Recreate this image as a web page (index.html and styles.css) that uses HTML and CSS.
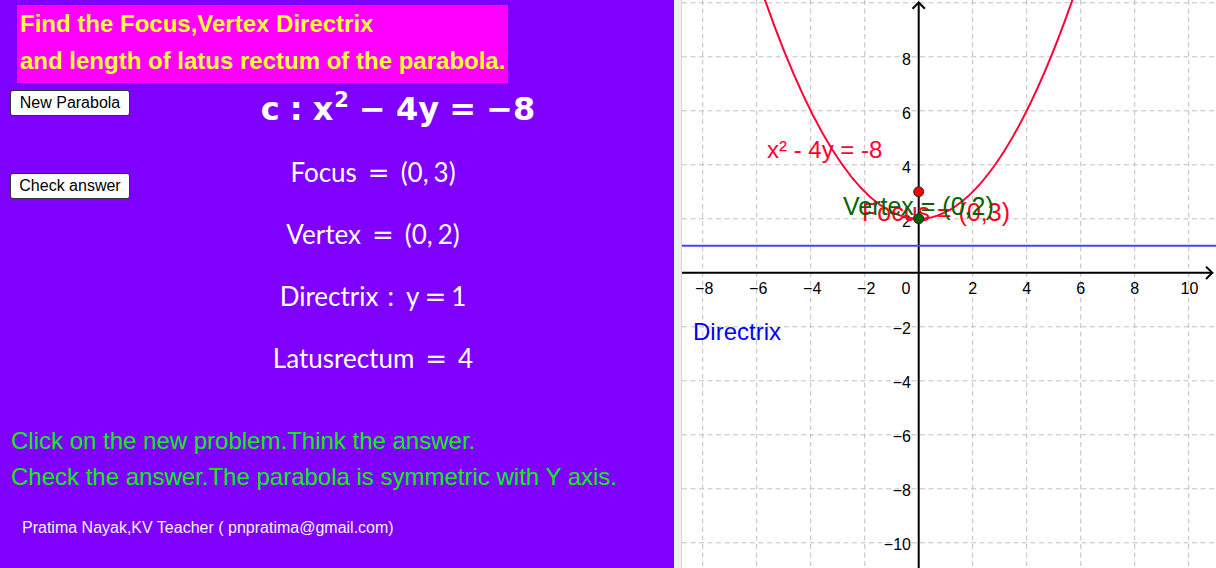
FILE: index.html
```html
<!DOCTYPE html>
<html lang="en">
<head>
<meta charset="utf-8">
<title>Parabola</title>
<link rel="stylesheet" href="styles.css">
</head>
<body>
<div class="app">
  <section class="panel">
    <div class="title">
      <div>Find the Focus,Vertex Directrix</div>
      <div>and length of latus rectum of the parabola.</div>
    </div>
    <div class="work">
      <div class="controls">
        <button class="btn btn-new" type="button">New Parabola</button>
        <button class="btn btn-check" type="button">Check answer</button>
      </div>
      <div class="math">
        <div class="formula">c : x<sup>2</sup> − 4y = −8</div>
        <div class="mline">Focus<span class="rel">=</span>(0,<span class="thin"></span>3)</div>
        <div class="mline">Vertex<span class="rel">=</span>(0,<span class="thin"></span>2)</div>
        <div class="mline">Directrix<span class="colon">:</span>y<span class="rel rel-tight">=</span>1</div>
        <div class="mline">Latusrectum<span class="rel">=</span>4</div>
      </div>
    </div>
    <div class="hint">
      <div>Click on the new problem.Think the answer.</div>
      <div>Check the answer.The parabola is symmetric with Y axis.</div>
    </div>
    <div class="footer">Pratima Nayak,KV Teacher ( pnpratima@gmail.com)</div>
  </section>
  <div class="divider"></div>
  <section class="graph">
    <svg class="plot" width="534" height="568" viewBox="682 0 534 568" xmlns="http://www.w3.org/2000/svg">
      <path class="grid" d="M702.7 0V568M756.7 0V568M810.7 0V568M864.7 0V568M918.7 0V568M972.7 0V568M1026.7 0V568M1080.7 0V568M1134.7 0V568M1188.7 0V568"/>
      <path class="grid" d="M682 2.8H1216M682 56.8H1216M682 110.8H1216M682 164.8H1216M682 218.8H1216M682 272.8H1216M682 326.8H1216M682 380.8H1216M682 434.8H1216M682 488.8H1216M682 542.8H1216"/>
      <path class="axis" d="M682 272.8H1212M918.7 568V2.5"/>
      <path class="axis" d="M1206 266.6L1212.3 272.8L1206 279M912.5 8.8L918.7 2.5L924.9 8.8"/>
      <g class="tick tick-x">
        <text x="704.2" y="294">−8</text>
        <text x="758.2" y="294">−6</text>
        <text x="812.2" y="294">−4</text>
        <text x="866.2" y="294">−2</text>
        <text x="906" y="294">0</text>
        <text x="972.7" y="294">2</text>
        <text x="1026.7" y="294">4</text>
        <text x="1080.7" y="294">6</text>
        <text x="1134.7" y="294">8</text>
        <text x="1189.5" y="294">10</text>
      </g>
      <g class="tick tick-y">
        <text x="911" y="64.5">8</text>
        <text x="911" y="118.5">6</text>
        <text x="911" y="172.5">4</text>
        <text x="911" y="226.5">2</text>
        <text x="911" y="334.3">−2</text>
        <text x="911" y="388.3">−4</text>
        <text x="911" y="442.3">−6</text>
        <text x="911" y="496.3">−8</text>
        <text x="911" y="550.3">−10</text>
      </g>
      <path class="directrix" d="M682 245.8H1216"/>
      <path class="curve" d="M756.7 -24.2Q918.7 461.8 1080.7 -24.2"/>
      <text class="lbl lbl-curve" x="767" y="158">x² - 4y = -8</text>
      <text class="lbl lbl-dir" x="693" y="340">Directrix</text>
      <text class="lbl lbl-big lbl-focus" x="862" y="221">Focus = (0,3)</text>
      <text class="lbl lbl-big lbl-vertex" x="843" y="215">Vertex = (0,2)</text>
      <circle class="pt pt-focus" cx="918.7" cy="191.8" r="5"/>
      <circle class="pt pt-vertex" cx="918.7" cy="218.8" r="5"/>
    </svg>
  </section>
</div>
</body>
</html>
```

FILE: styles.css
```css
* { box-sizing: border-box; }

html, body {
  margin: 0;
  padding: 0;
  width: 1216px;
  height: 568px;
  overflow: hidden;
  background: #ffffff;
}

.app {
  display: flex;
  width: 1216px;
  height: 568px;
}

.panel {
  width: 674px;
  height: 568px;
  background: #7f00ff;
  display: flex;
  flex-direction: column;
  font-family: "Liberation Sans", Arial, sans-serif;
}

.title {
  margin: 5px 0 0 17px;
  width: 491px;
  height: 78px;
  padding: 0 0 0 3px;
  background: #ff00ff;
  color: #ffff33;
  font-weight: bold;
  font-size: 24px;
  line-height: 37px;
  white-space: nowrap;
}

.work {
  display: flex;
  height: 307px;
}

.controls {
  width: 130px;
  padding-left: 10px;
  display: flex;
  flex-direction: column;
  align-items: flex-start;
}

.btn {
  width: 120px;
  height: 26px;
  padding: 0;
  background: #ffffff;
  border: 1px solid #333333;
  border-radius: 3px;
  font-family: "Liberation Sans", Arial, sans-serif;
  font-size: 16px;
  color: #000000;
}

.btn-new { margin-top: 7px; }
.btn-check { margin-top: 57px; }

.math {
  width: 486px;
  display: flex;
  flex-direction: column;
  align-items: center;
  color: #ffffff;
  font-family: Lato, "DejaVu Sans", sans-serif;
  white-space: nowrap;
}

.formula {
  height: 52px;
  line-height: 52px;
  margin-bottom: 6px;
  padding-left: 50px;
  font-family: "DejaVu Sans", sans-serif;
  font-size: 32px;
  font-weight: bold;
  word-spacing: -1px;
}

.formula sup {
  font-size: 21px;
  line-height: 0;
  vertical-align: 13px;
  margin-left: 1px;
}

.mline {
  height: 62px;
  line-height: 62px;
  font-size: 26px;
}

.rel {
  font-family: "DejaVu Sans", sans-serif;
  margin: 0 11px;
}
.rel-tight { margin: 0 5px; }
.colon { margin: 0 12px 0 9px; }
.thin { display: inline-block; width: 5px; }

.hint {
  margin-top: 33px;
  padding-left: 11px;
  color: #11f011;
  font-size: 24px;
  line-height: 36px;
  white-space: nowrap;
}

.footer {
  margin-top: 23px;
  padding-left: 22px;
  color: #f4f4f4;
  font-size: 16px;
  line-height: 20px;
  white-space: nowrap;
}

.divider {
  width: 8px;
  height: 568px;
  background: #f0f0f0;
  border-right: 1px solid #d6d6d6;
}

.graph {
  width: 534px;
  height: 568px;
  background: #ffffff;
}

.plot { display: block; }

.grid {
  fill: none;
  stroke: #c0c0c0;
  stroke-width: 1;
  stroke-dasharray: 5 3.5;
}

.axis {
  fill: none;
  stroke: #000000;
  stroke-width: 2;
}

.tick {
  font-family: "Liberation Sans", Arial, sans-serif;
  font-size: 16px;
  fill: #000000;
}

.tick-x { text-anchor: middle; }
.tick-y { text-anchor: end; }

.directrix {
  stroke: #4444ff;
  stroke-width: 2;
}

.curve {
  fill: none;
  stroke: #ff0033;
  stroke-width: 2;
}

.lbl {
  font-family: "Liberation Sans", Arial, sans-serif;
  font-size: 24px;
}

.lbl-big { font-size: 25px; }

.lbl-curve { fill: #ff0033; }
.lbl-dir { fill: #0000ff; }
.lbl-focus { fill: #ff0022; }
.lbl-vertex { fill: #006400; }

.pt { stroke: #2a2a2a; stroke-width: 1; }
.pt-focus { fill: #ff0000; }
.pt-vertex { fill: #006400; }
```
